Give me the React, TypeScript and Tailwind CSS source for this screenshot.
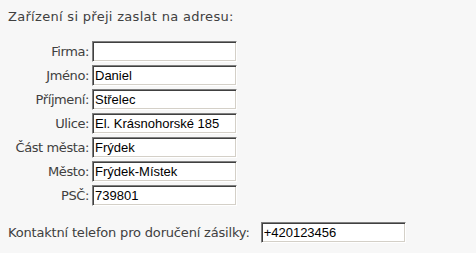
const rows: [string, string][] = [
  ["Firma", ""],
  ["Jméno", "Daniel"],
  ["Příjmení", "Střelec"],
  ["Ulice", "El. Krásnohorské 185"],
  ["Část města", "Frýdek"],
  ["Město", "Frýdek-Místek"],
  ["PSČ", "739801"],
];

const labelFont = "font-['DejaVu_Sans',sans-serif] text-[13px] leading-[16px] text-[#404040]";

function Field({ value }: { value: string }) {
  return (
    <input
      type="text"
      defaultValue={value}
      className="box-border block h-[21px] w-[145px] border border-t-[#808080] border-l-[#808080] border-r-white border-b-white bg-white px-[2px] font-['Liberation_Sans',Arial,sans-serif] text-[13px] text-black shadow-[inset_1px_1px_0_#404040,inset_-1px_-1px_0_#d4d0c8] outline-none"
    />
  );
}

export default function App() {
  return (
    <div className="h-[253px] w-[476px] bg-[#f7f7f7] pl-2 pt-[9px]">
      <p className={`${labelFont} tracking-[0.3px]`}>Zařízení si přeji zaslat na adresu:</p>
      <div className="mt-[16px] grid grid-cols-[81px_auto] gap-x-[3px] gap-y-[3px]">
        {rows.map(([label, value]) => (
          <div key={label} className="contents">
            <span
              className={`${labelFont} flex h-[21px] items-center justify-end whitespace-nowrap tracking-[-0.4px]`}
            >
              {label}:
            </span>
            <Field value={value} />
          </div>
        ))}
      </div>
      <div className="mt-[16px] flex items-center gap-[11px]">
        <span className={`${labelFont} whitespace-nowrap tracking-[-0.18px]`}>
          Kontaktní telefon pro doručení zásilky:
        </span>
        <Field value="+420123456" />
      </div>
    </div>
  );
}
